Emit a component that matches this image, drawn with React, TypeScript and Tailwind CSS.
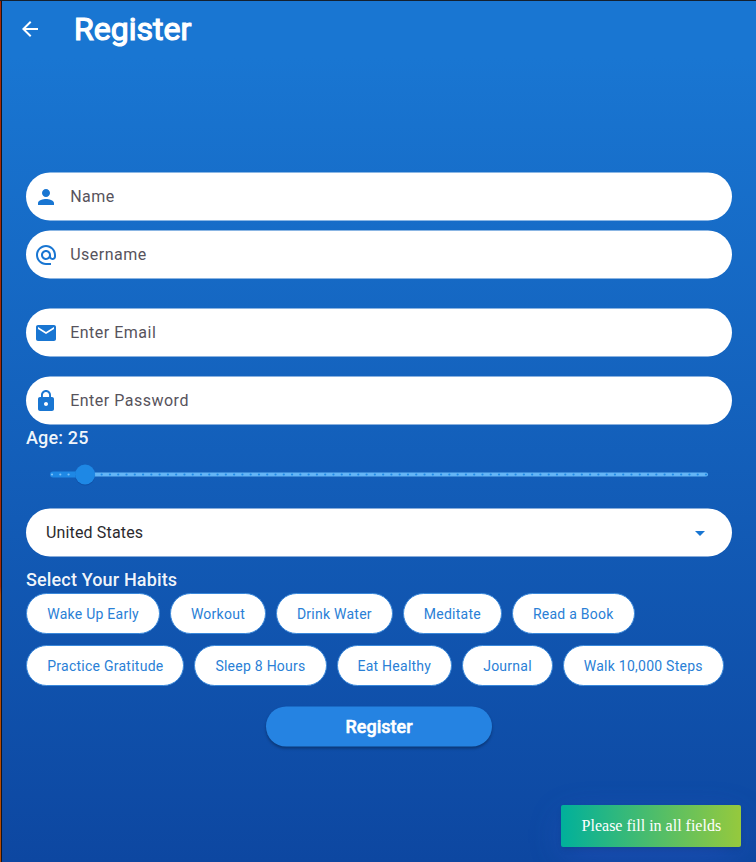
import React from "react";

const PERSON = "M12 12c2.21 0 4-1.79 4-4s-1.79-4-4-4-4 1.79-4 4 1.79 4 4 4zm0 2c-2.67 0-8 1.34-8 4v2h16v-2c0-2.66-5.33-4-8-4z";
const AT =
  "M12 1.95c-5.52 0-10 4.48-10 10s4.48 10 10 10h5v-2h-5c-4.34 0-8-3.66-8-8s3.66-8 8-8 8 3.66 8 8v1.43c0 .79-.71 1.57-1.5 1.57s-1.5-.78-1.5-1.57v-1.43c0-2.76-2.24-5-5-5s-5 2.24-5 5 2.24 5 5 5c1.38 0 2.64-.56 3.54-1.47.65.89 1.77 1.47 2.96 1.47 1.97 0 3.5-1.6 3.5-3.57v-1.43c0-5.52-4.48-10-10-10zm0 13c-1.66 0-3-1.34-3-3s1.34-3 3-3 3 1.34 3 3-1.34 3-3 3z";
const MAIL = "M20 4H4c-1.1 0-1.99.9-1.99 2L2 18c0 1.1.9 2 2 2h16c1.1 0 2-.9 2-2V6c0-1.1-.9-2-2-2zm0 4l-8 5-8-5V6l8 5 8-5v2z";
const LOCK =
  "M18 8h-1V6c0-2.76-2.24-5-5-5S7 3.24 7 6v2H6c-1.1 0-2 .9-2 2v10c0 1.1.9 2 2 2h12c1.1 0 2-.9 2-2V10c0-1.1-.9-2-2-2zm-6 9c-1.1 0-2-.9-2-2s.9-2 2-2 2 .9 2 2-.9 2-2 2zm3.1-9H8.9V6c0-1.71 1.39-3.1 3.1-3.1 1.71 0 3.1 1.39 3.1 3.1v2z";
const BACK = "M20 11H7.83l5.59-5.59L12 4l-8 8 8 8 1.41-1.41L7.83 13H20v-2z";

function Icon({ d, className = "" }: { d: string; className?: string }) {
  return (
    <svg viewBox="0 0 24 24" className={`shrink-0 fill-current ${className}`}>
      <path d={d} />
    </svg>
  );
}

function Field({ icon, label, className = "" }: { icon: string; label: string; className?: string }) {
  return (
    <div className={`flex h-12 translate-y-[0.5px] items-center rounded-full bg-white pl-2 ${className}`}>
      <Icon d={icon} className="size-6 translate-y-[0.5px] text-[#1976d2]" />
      <span className="ml-[12.2px] text-base tracking-[0.5px] text-[#57535c]">{label}</span>
    </div>
  );
}

const FIRST_ROW = ["Wake Up Early", "Workout", "Drink Water", "Meditate", "Read a Book"];
const SECOND_ROW = ["Practice Gratitude", "Sleep 8 Hours", "Eat Healthy", "Journal", "Walk 10,000 Steps"];

function ChipRow({ items }: { items: string[] }) {
  return (
    <div className="flex gap-[10px] pl-[0.3px]">
      {items.map((item) => (
        <button
          key={item}
          className="h-[41px] shrink-0 whitespace-nowrap rounded-full border border-[#3a88da] bg-white px-[19.98px] text-sm tracking-[0.25px] text-[#2a80d6]"
        >
          {item}
        </button>
      ))}
    </div>
  );
}

function AgeSlider() {
  const steps = 79;
  const current = 4;
  const ticks = Array.from({ length: steps + 1 }, (_, i) => i);
  return (
    <svg viewBox="0 0 706 48" className="block h-12 w-full overflow-visible">
      <rect x="50" y="22.5" width="632" height="4" rx="2" fill="#64b5f6" />
      <rect x="24" y="21.5" width="40" height="6" rx="3" fill="#1e88e5" />
      {ticks.map((i) => (
        <circle key={i} cx={26 + (i * 654) / steps} cy="24.5" r="1.1" fill={i < current ? "#7cc2fa" : "#1e88e5"} />
      ))}
      <circle cx="59.1" cy="25.5" r="10" fill="#0d3f8f" fillOpacity="0.4" />
      <circle cx="59.1" cy="24.5" r="10" fill="#1e88e5" />
    </svg>
  );
}

export default function App() {
  return (
    <div className="relative h-[862px] w-[756px] overflow-hidden border-t border-[#14202e] bg-linear-to-b/srgb from-[#1976d2] from-[56px] to-[#0d47a1] pl-[2px] font-[Roboto,sans-serif]">
      <div className="absolute inset-y-0 left-0 w-[2px] border-r border-[#14141c] bg-linear-to-b from-[#a82c08] from-[68%] to-[#b84c04] to-[69%]" />
      <header className="flex h-14 items-center pl-4 text-white">
        <Icon d={BACK} className="size-6" />
        <h1 className="ml-8 text-[32px] leading-none font-normal [-webkit-text-stroke:1.2px_white]">Register</h1>
      </header>
      <main className="flex flex-col px-6 pt-[115px]">
        <Field icon={PERSON} label="Name" />
        <Field icon={AT} label="Username" className="mt-[10px]" />
        <Field icon={MAIL} label="Enter Email" className="mt-[30px]" />
        <Field icon={LOCK} label="Enter Password" className="mt-5" />
        <p className="h-[26px] text-lg leading-[27px] font-medium tracking-[0.15px] text-white/95">Age: 25</p>
        <AgeSlider />
        <div className="mt-[10px] flex h-12 translate-y-[0.5px] items-center justify-between rounded-full bg-white pr-5 pl-5">
          <span className="text-base tracking-[0.15px] text-[#2b292e]">United States</span>
          <svg viewBox="0 0 24 24" className="size-6 translate-y-[0.5px] fill-[#1976d2]">
            <path d="M7 10l5 5 5-5z" />
          </svg>
        </div>
        <p className="mt-[10px] h-[27px] text-lg leading-[27px] font-medium tracking-[0.15px] text-white/95">Select Your Habits</p>
        <div className="flex flex-col gap-[11px]">
          <ChipRow items={FIRST_ROW} />
          <ChipRow items={SECOND_ROW} />
        </div>
        <button className="mt-5 flex h-10 w-[226px] translate-y-[0.5px] items-center justify-center self-center rounded-full bg-[#2583e2] text-lg font-medium text-white shadow-[0_2px_3px_rgba(0,0,0,0.3)] [-webkit-text-stroke:0.5px_white]">
          Register
        </button>
      </main>
      <div className="absolute right-[15px] bottom-[15px] h-[42px] w-[180px] rounded-[2px] bg-linear-to-r/srgb from-[#00b09b] to-[#96c93d] pt-3 pl-[20.6px] font-['Liberation_Serif',serif] text-base leading-[18px] whitespace-nowrap text-white shadow-[0_3px_6px_-1px_rgba(0,0,0,0.12),0_10px_36px_-4px_rgba(77,96,232,0.3)]">
        Please fill in all fields
      </div>
    </div>
  );
}
